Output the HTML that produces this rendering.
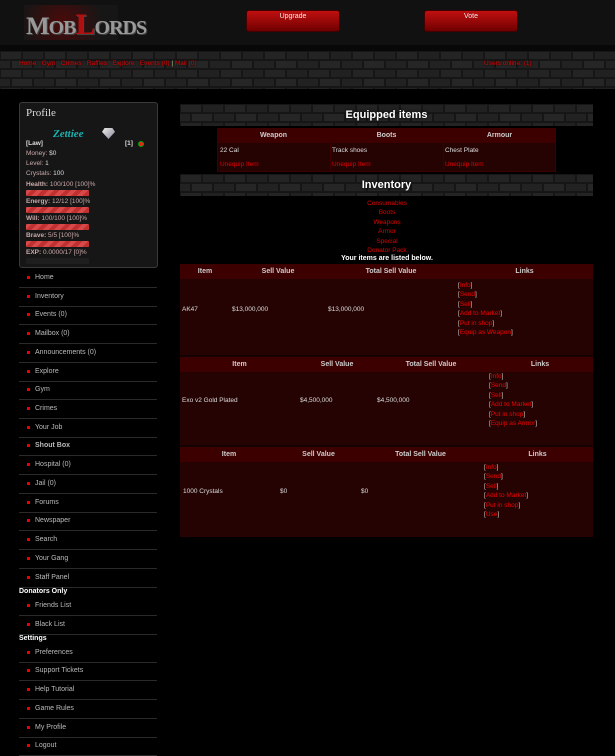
<!DOCTYPE html>
<html><head><meta charset="utf-8"><style>
*{margin:0;padding:0;box-sizing:border-box}
body{width:615px;height:750px;overflow:hidden;background:#000;font-family:"Liberation Sans",sans-serif;font-size:7px;color:#ddd;position:relative}
.a{position:absolute}
.red{color:#e00000}
.btn{background:linear-gradient(#c01010,#700000);border:1px solid #400;border-radius:3px;color:#eee;text-align:center;font-size:7px;padding-top:2px}
.side{left:19px;width:138px;height:19px;border-bottom:1px solid #2a2a2a;color:#bbb;font-size:7px;line-height:18px;padding-left:16px}
.side:before{content:"";position:absolute;left:8px;top:7px;width:3px;height:3px;background:#e00}
.hd{color:#fff;font-weight:bold;font-size:8px}
.tbl{background:#250303}
.th{background:#3d0000;color:#ccc;font-weight:bold;font-size:7px;text-align:center;line-height:15px}
.bar{left:26px;width:63px;height:6px;background:repeating-linear-gradient(135deg,#d84a4a 0 4px,#c03030 4px 8px);border-radius:1px}
.lbl{left:26px;font-size:6.5px;color:#caa}
.lbl b{color:#caa}
.cell{color:#ddd;font-size:6.5px}
.lk{font-size:6.5px;color:#ccc;line-height:9.4px}
.lk span{color:#e00}
.bt{position:absolute;left:0;top:0;width:100%;height:100%;text-align:center;font-weight:bold;font-size:11px;color:#fff;text-shadow:0 0 3px #000}
</style></head><body>
<svg width="0" height="0" style="position:absolute"><defs>
<pattern id="br" width="44" height="18" patternUnits="userSpaceOnUse">
<rect width="44" height="18" fill="#161616"/>
<rect x="1" y="1" width="20" height="7" fill="#242424"/>
<rect x="23" y="1" width="20" height="7" fill="#212121"/>
<rect x="-10" y="10" width="20" height="7" fill="#222"/>
<rect x="12" y="10" width="20" height="7" fill="#262626"/>
<rect x="34" y="10" width="20" height="7" fill="#222"/>
</pattern></defs></svg>
<div class="a" style="left:0;top:0;width:615px;height:45px;background:#111"></div>
<div class="a" style="left:24px;top:5px;width:94px;height:35px;background:radial-gradient(circle at 40% 50%,#4a0a0a,#161616 70%)"></div>
<div class="a" style="left:26px;top:8px;font-family:'Liberation Serif',serif;font-weight:bold;font-size:25px;color:#999;letter-spacing:-1px;text-shadow:1px 1px 0 #444">M<span style="font-size:20px">OB</span><span style="color:#b01010;font-size:30px">L</span><span style="font-size:20px">ORDS</span></div>
<div class="a btn" style="left:246px;top:10px;width:94px;height:22px">Upgrade</div>
<div class="a btn" style="left:424px;top:10px;width:94px;height:22px">Vote</div>
<div class="a" style="left:0;top:45px;width:615px;height:6px;background:#080808"></div>
<svg class="a" style="left:0;top:51px" width="615" height="38"><rect width="615" height="38" fill="url(#br)"/></svg>
<div class="a red" style="left:19px;top:60px;font-size:6.5px;text-shadow:0 0 2px #000">Home &nbsp; Gym &nbsp; Crimes &nbsp; Raffles &nbsp; Explore &nbsp; Events (0) <span style="color:#cc9">|</span> Mail (0)</div>
<div class="a red" style="left:484px;top:60px;font-size:6.5px;text-shadow:0 0 2px #000">Users online: (1)</div>

<div class="a" style="left:19px;top:102px;width:139px;height:166px;background:#161616;border:1px solid #3a3a3a;border-radius:3px"></div>
<div class="a" style="left:26px;top:107px;font-family:'Liberation Serif',serif;font-size:11px;color:#ddd">Profile</div>
<div class="a" style="left:53px;top:128px;font-family:'Liberation Serif',serif;font-weight:bold;font-size:11px;color:#1ab0b0;font-style:italic">Zettiee</div>
<div class="a" style="left:102px;top:128px;width:13px;height:11px;background:linear-gradient(135deg,#eee,#889);clip-path:polygon(20% 0,80% 0,100% 35%,50% 100%,0 35%)"></div>
<div class="a" style="left:26px;top:140px;font-weight:bold;color:#ddd;font-size:6.5px">[Law]</div>
<div class="a" style="left:125px;top:140px;font-weight:bold;color:#ddd;font-size:6.5px">[1]</div>
<div class="a" style="left:138px;top:141px;width:6px;height:6px;border-radius:50%;background:#e22;border:1px solid #0a0"></div>
<div class="a lbl" style="top:150px">Money: <span style="color:#ddd">$0</span></div>
<div class="a lbl" style="top:160px">Level: <span style="color:#ddd">1</span></div>
<div class="a lbl" style="top:170px">Crystals: <span style="color:#ddd">100</span></div>
<div class="a lbl" style="top:181px"><b>Health:</b> 100/100 [100]%</div><div class="a bar" style="top:190px"></div>
<div class="a lbl" style="top:198px"><b>Energy:</b> 12/12 [100]%</div><div class="a bar" style="top:207px"></div>
<div class="a lbl" style="top:215px"><b>Will:</b> 100/100 [100]%</div><div class="a bar" style="top:224px"></div>
<div class="a lbl" style="top:232px"><b>Brave:</b> 5/5 [100]%</div><div class="a bar" style="top:241px"></div>
<div class="a lbl" style="top:249px"><b>EXP:</b> 0.0000/17 [0]%</div><div class="a" style="left:26px;top:258px;width:63px;height:6px;background:#1e1e1e"></div>

<div class="a side" style="top:269px">Home</div>
<div class="a side" style="top:288px">Inventory</div>
<div class="a side" style="top:306px">Events (0)</div>
<div class="a side" style="top:325px">Mailbox (0)</div>
<div class="a side" style="top:344px">Announcements (0)</div>
<div class="a side" style="top:363px">Explore</div>
<div class="a side" style="top:381px">Gym</div>
<div class="a side" style="top:400px">Crimes</div>
<div class="a side" style="top:419px">Your Job</div>
<div class="a side" style="top:437px;font-weight:bold">Shout Box</div>
<div class="a side" style="top:456px">Hospital (0)</div>
<div class="a side" style="top:475px">Jail (0)</div>
<div class="a side" style="top:494px">Forums</div>
<div class="a side" style="top:512px">Newspaper</div>
<div class="a side" style="top:531px">Search</div>
<div class="a side" style="top:550px">Your Gang</div>
<div class="a side" style="top:569px">Staff Panel</div>
<div class="a hd" style="left:19px;top:588px;font-size:7px">Donators Only</div>
<div class="a side" style="top:597px">Friends List</div>
<div class="a side" style="top:616px">Black List</div>
<div class="a hd" style="left:19px;top:635px;font-size:7px">Settings</div>
<div class="a side" style="top:644px">Preferences</div>
<div class="a side" style="top:662px">Support Tickets</div>
<div class="a side" style="top:681px">Help Tutorial</div>
<div class="a side" style="top:700px">Game Rules</div>
<div class="a side" style="top:719px">My Profile</div>
<div class="a side" style="top:737px">Logout</div>

<div class="a" style="left:180px;top:104px;width:413px;height:22px"><svg width="413" height="22" style="position:absolute;left:0;top:0"><rect width="413" height="22" fill="url(#br)"/></svg><div class="bt" style="line-height:22px">Equipped items</div></div>
<div class="a tbl" style="left:217px;top:128px;width:339px;height:44px;border:1px solid #3d0000"></div>
<div class="a th" style="left:217px;top:128px;width:339px;height:15px"></div>
<div class="a th" style="left:217px;top:128px;width:113px">Weapon</div>
<div class="a th" style="left:330px;top:128px;width:113px">Boots</div>
<div class="a th" style="left:443px;top:128px;width:113px">Armour</div>
<div class="a" style="left:330px;top:143px;width:1px;height:29px;background:#3d0000"></div>
<div class="a" style="left:443px;top:143px;width:1px;height:29px;background:#3d0000"></div>
<div class="a cell" style="left:220px;top:147px">22 Cal</div>
<div class="a cell" style="left:332px;top:147px">Track shoes</div>
<div class="a cell" style="left:445px;top:147px">Chest Plate</div>
<div class="a red" style="left:220px;top:161px;font-size:6.5px">Unequip Item</div>
<div class="a red" style="left:332px;top:161px;font-size:6.5px">Unequip Item</div>
<div class="a red" style="left:445px;top:161px;font-size:6.5px">Unequip Item</div>

<div class="a" style="left:180px;top:174px;width:413px;height:22px"><svg width="413" height="22" style="position:absolute;left:0;top:0"><rect width="413" height="22" fill="url(#br)"/></svg><div class="bt" style="line-height:22px">Inventory</div></div>
<div class="a red" style="left:300px;top:199px;width:174px;text-align:center;line-height:9.4px;font-size:6.5px">Consumables<br>Boots<br>Weapons<br>Armor<br>Special<br>Donator Pack</div>
<div class="a" style="left:300px;top:255px;width:174px;text-align:center;font-weight:bold;color:#fff;font-size:7px">Your items are listed below.</div>

<div class="a tbl" style="left:180px;top:264px;width:413px;height:91px"></div>
<div class="a th" style="left:180px;top:264px;width:413px;height:15px"></div>
<div class="a th" style="left:180px;top:264px;width:50px">Item</div>
<div class="a th" style="left:230px;top:264px;width:96px">Sell Value</div>
<div class="a th" style="left:326px;top:264px;width:130px">Total Sell Value</div>
<div class="a th" style="left:456px;top:264px;width:137px">Links</div>
<div class="a cell" style="left:182px;top:306px">AK47</div>
<div class="a cell" style="left:232px;top:306px">$13,000,000</div>
<div class="a cell" style="left:328px;top:306px">$13,000,000</div>
<div class="a lk" style="left:458px;top:281px">[<span>Info</span>]<br>[<span>Send</span>]<br>[<span>Sell</span>]<br>[<span>Add to Market</span>]<br>[<span>Put in shop</span>]<br>[<span>Equip as Weapon</span>]</div>

<div class="a" style="left:180px;top:355px;width:413px;height:2px;background:#150202"></div>
<div class="a tbl" style="left:180px;top:357px;width:413px;height:90px"></div>
<div class="a th" style="left:180px;top:357px;width:413px;height:14px"></div>
<div class="a th" style="left:180px;top:357px;width:119px">Item</div>
<div class="a th" style="left:299px;top:357px;width:76px">Sell Value</div>
<div class="a th" style="left:375px;top:357px;width:112px">Total Sell Value</div>
<div class="a th" style="left:487px;top:357px;width:106px">Links</div>
<div class="a cell" style="left:182px;top:397px">Exo v2 Gold Plated</div>
<div class="a cell" style="left:300px;top:397px">$4,500,000</div>
<div class="a cell" style="left:377px;top:397px">$4,500,000</div>
<div class="a lk" style="left:489px;top:372px">[<span>Info</span>]<br>[<span>Send</span>]<br>[<span>Sell</span>]<br>[<span>Add to Market</span>]<br>[<span>Put in shop</span>]<br>[<span>Equip as Armor</span>]</div>

<div class="a" style="left:180px;top:445px;width:413px;height:2px;background:#150202"></div>
<div class="a tbl" style="left:180px;top:447px;width:413px;height:90px"></div>
<div class="a th" style="left:180px;top:447px;width:413px;height:14px"></div>
<div class="a th" style="left:180px;top:447px;width:98px">Item</div>
<div class="a th" style="left:278px;top:447px;width:81px">Sell Value</div>
<div class="a th" style="left:359px;top:447px;width:123px">Total Sell Value</div>
<div class="a th" style="left:482px;top:447px;width:111px">Links</div>
<div class="a cell" style="left:183px;top:488px">1000 Crystals</div>
<div class="a cell" style="left:280px;top:488px">$0</div>
<div class="a cell" style="left:361px;top:488px">$0</div>
<div class="a lk" style="left:484px;top:463px">[<span>Info</span>]<br>[<span>Send</span>]<br>[<span>Sell</span>]<br>[<span>Add to Market</span>]<br>[<span>Put in shop</span>]<br>[<span>Use</span>]</div>
</body></html>
